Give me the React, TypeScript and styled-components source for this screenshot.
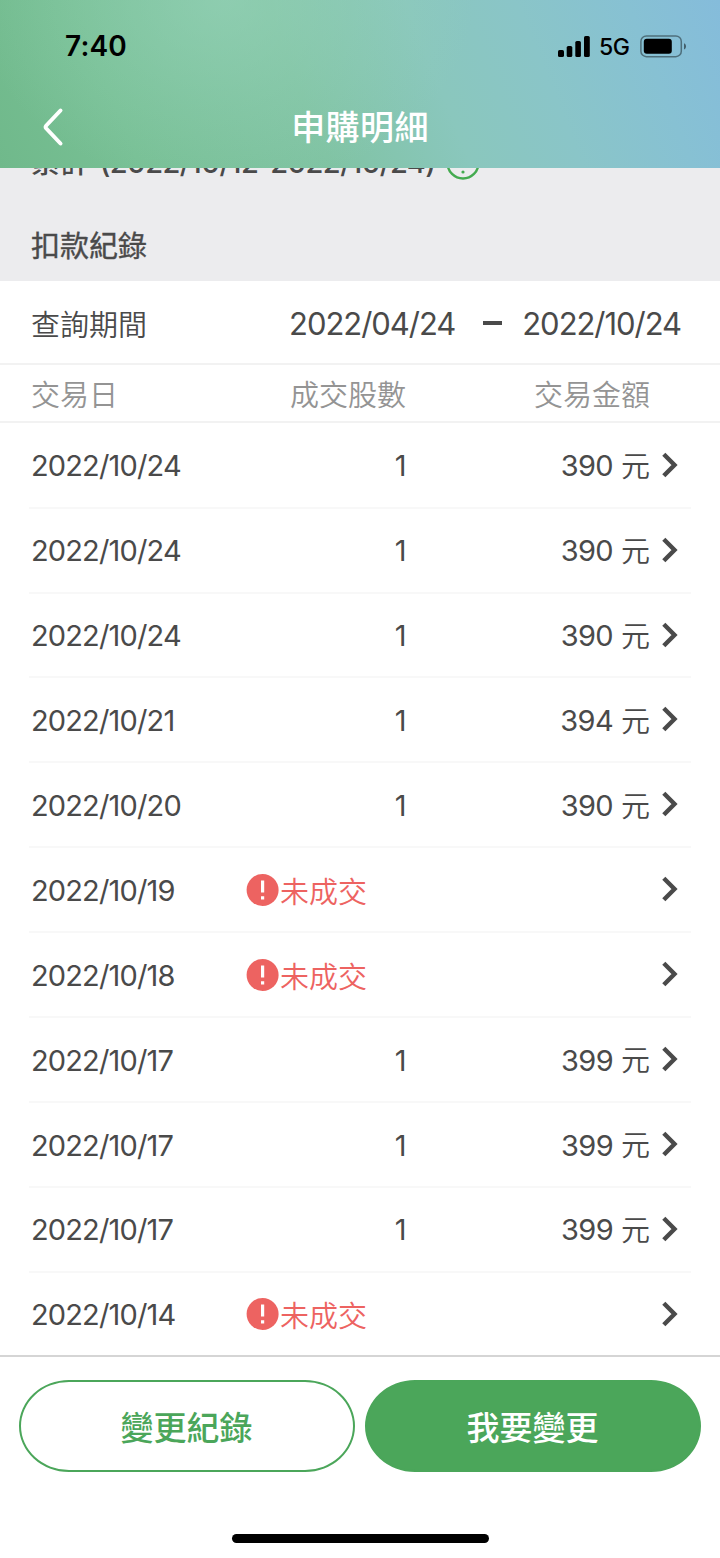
import React from "react";
import styled, { createGlobalStyle } from "styled-components";

const GlobalStyle = createGlobalStyle`
  *, *::before, *::after { box-sizing: border-box; }
  body {
    margin: 0;
    background: #fff;
    color: #4a4a4a;
    font-family: Inter, "Noto Sans CJK TC", sans-serif;
  }
`;

const Screen = styled.div`
  width: 720px;
  height: 1558px;
  display: flex;
  flex-direction: column;
  overflow: hidden;
  background: #fff;
`;

const Header = styled.header`
  flex: none;
  height: 168px;
  display: flex;
  flex-direction: column;
  background:
    radial-gradient(ellipse 250px 190px at 225px 0, rgba(152, 212, 186, 0.6), rgba(152, 212, 186, 0.25) 55%, rgba(152, 212, 186, 0)),
    linear-gradient(68deg, #70b98b 0%, #78c095 18%, #80c3a3 42%, #8ac7bd 60%, #8ac5c8 74%, #87c1d3 88%, #85bcdb 100%);
`;

const StatusBar = styled.div`
  height: 88px;
  padding: 4px 34px 0 65px;
  display: flex;
  align-items: center;
  justify-content: space-between;
  color: #000;
`;

const Clock = styled.span`
  font-size: 28px;
  font-weight: 600;
  letter-spacing: 0.2px;
`;

const StatusIcons = styled.div`
  display: flex;
  align-items: center;
`;

const Network = styled.span`
  width: 50px;
  padding: 2px 0 0 9px;
  font-size: 23px;
  font-weight: 500;
  letter-spacing: -0.5px;
  white-space: nowrap;
`;

const NavBar = styled.nav`
  height: 80px;
  display: grid;
  grid-template-columns: 120px 1fr 120px;
  align-items: center;
`;

const BackButton = styled.button`
  width: 30px;
  height: 44px;
  margin: 0 0 2px 38px;
  padding: 0;
  border: 0;
  background: none;
`;

const Title = styled.h1`
  margin: 0;
  text-align: center;
  color: #fff;
  font-size: 34px;
  font-weight: 500;
  line-height: 50px;
  letter-spacing: 0.4px;
`;

const Summary = styled.section`
  flex: none;
  height: 113px;
  padding: 0 31px;
  display: flex;
  flex-direction: column;
  justify-content: flex-end;
  overflow: hidden;
  background: #ececee;
`;

const Accumulated = styled.div`
  display: flex;
  align-items: center;
  gap: 11px;
  height: 40px;
  margin-bottom: 42px;
  font-size: 29px;
  font-weight: 500;
  white-space: nowrap;
`;

const AccumulatedText = styled.span`
  padding-bottom: 7px;
`;

const AccumulatedRange = styled.span`
  margin-left: 3px;
  letter-spacing: -0.6px;
`;

const SectionTitle = styled.h2`
  margin: 0 0 12px;
  font-size: 29px;
  font-weight: 400;
  line-height: 44px;
  -webkit-text-stroke: 0.35px #4a4a4a;
`;

const PeriodRow = styled.div`
  flex: none;
  height: 84px;
  padding: 2px 39px 0 31px;
  display: flex;
  align-items: center;
  border-bottom: 2px solid #f2f2f2;
`;

const PeriodLabel = styled.span`
  font-size: 29px;
  font-weight: 350;
`;

const PeriodDates = styled.div`
  margin-left: auto;
  display: flex;
  align-items: center;
  padding-top: 1px;
  font-size: 31px;
  letter-spacing: -1.05px;
`;

const Dash = styled.i`
  width: 19px;
  height: 4px;
  margin: 0 20px 2px 28px;
  background: #4a4a4a;
`;

const TableHead = styled.div`
  flex: none;
  height: 58px;
  display: grid;
  grid-template-columns: 31px 215px 160px 244px 70px;
  align-items: center;
  border-bottom: 2px solid #f2f2f2;
  color: #949494;
  font-size: 29px;
  font-weight: 350;
`;

const Cell = styled.div<{ $align?: "left" | "right" }>`
  display: flex;
  align-items: center;
  justify-content: ${(p) => (p.$align === "right" ? "flex-end" : "flex-start")};
  white-space: nowrap;
`;

const List = styled.div`
  flex: none;
  height: 932px;
  padding-top: 0.8px;
  overflow: hidden;
`;

const Row = styled.div`
  height: 84.9px;
  margin: 0 29px;
  display: grid;
  grid-template-columns: 2px 215px 160px 244px 41px;
  align-items: center;
  border-bottom: 2px solid #f8f8f8;
  font-size: 29px;
  letter-spacing: -0.65px;
`;

const NumberCell = styled(Cell)`
  padding-top: 1.4px;
`;

const DateCell = styled(NumberCell)`
  letter-spacing: -0.85px;
`;

const Unit = styled.span`
  margin-left: 8px;
  line-height: 40px;
  font-weight: 350;
  letter-spacing: 0;
  transform: translateY(0.6px);
`;

const Failed = styled.span`
  display: flex;
  align-items: center;
  gap: 1px;
  color: #ed6361;
  font-weight: 350;
  letter-spacing: 0;
`;

const Footer = styled.footer`
  flex: 1;
  display: flex;
  flex-direction: column;
  align-items: center;
  padding: 23px 19px 0;
  border-top: 2px solid #d5d5d5;
`;

const Actions = styled.div`
  width: 100%;
  display: grid;
  grid-template-columns: 1fr 1fr;
  gap: 10px;
`;

const ActionButton = styled.button<{ $primary?: boolean }>`
  height: 92px;
  padding: 0 1px 0 0;
  border: 2px solid #4ba65a;
  border-radius: 50px / 46px;
  background: ${(p) => (p.$primary ? "#4ba65a" : "#fff")};
  color: ${(p) => (p.$primary ? "#fff" : "#4ba65a")};
  font-family: inherit;
  font-size: 33px;
  font-weight: 500;
`;

const HomeIndicator = styled.div`
  width: 257px;
  height: 9px;
  margin-top: 62px;
  border-radius: 5px;
  background: #000;
`;

const Signal = () => (
  <svg width="32" height="21" viewBox="0 0 32 21">
    <rect x="0" y="14" width="6" height="7" rx="1.6" />
    <rect x="8.7" y="10" width="5.6" height="11" rx="1.6" />
    <rect x="17.3" y="5" width="5.6" height="16" rx="1.6" />
    <rect x="26" y="0" width="5.8" height="21" rx="1.6" />
  </svg>
);

const Battery = () => (
  <svg width="46" height="23" viewBox="0 0 46 23">
    <rect x="0.9" y="0.9" width="40.4" height="20.8" rx="5.5" fill="none" stroke="#000" strokeOpacity="0.42" strokeWidth="1.5" />
    <rect x="3.8" y="3.7" width="28" height="15" rx="3" />
    <path d="M44 8.2c2.7 1 2.7 5.400 0 6.400z" fillOpacity="0.5" />
  </svg>
);

const BackIcon = () => (
  <svg width="30" height="44" viewBox="0 0 30 44" fill="none" stroke="#fff" strokeWidth="4" strokeLinecap="round" strokeLinejoin="round">
    <path d="M22.500 5.500L8.300 20.500Q7 22 8.300 23.500L22.500 38.500" />
  </svg>
);

const InfoIcon = () => (
  <svg width="34" height="34" viewBox="0 0 34 34">
    <circle cx="17" cy="17" r="15.500" fill="none" stroke="#44ab50" strokeWidth="2.400" />
    <path d="M17 8v10" stroke="#44ab50" strokeWidth="2.400" />
    <circle cx="17" cy="26" r="1.600" fill="#44ab50" />
  </svg>
);

const AlertIcon = () => (
  <svg width="33" height="34" viewBox="0 0 33 34">
    <circle cx="16.600" cy="17" r="16" fill="#ed6361" />
    <path d="M16.600 7.500v12M16.600 23.200v3.300" stroke="#fff" strokeWidth="3.200" />
  </svg>
);

const Chevron = () => (
  <svg width="20" height="28" viewBox="0 0 20 28" fill="none" stroke="#4a4a4a" strokeWidth="4.400">
    <path d="M2.800 3.200L13.500 14L2.800 24.800" />
  </svg>
);

const ChevronCell = styled(Cell)`
  padding: 0 0 1px 11px;
`;

type Entry = { date: string; shares?: string; amount?: string };

const entries: Entry[] = [
  { date: "2022/10/24", shares: "1", amount: "390" },
  { date: "2022/10/24", shares: "1", amount: "390" },
  { date: "2022/10/24", shares: "1", amount: "390" },
  { date: "2022/10/21", shares: "1", amount: "394" },
  { date: "2022/10/20", shares: "1", amount: "390" },
  { date: "2022/10/19" },
  { date: "2022/10/18" },
  { date: "2022/10/17", shares: "1", amount: "399" },
  { date: "2022/10/17", shares: "1", amount: "399" },
  { date: "2022/10/17", shares: "1", amount: "399" },
  { date: "2022/10/14" },
];

export default function App() {
  return (
    <Screen>
      <GlobalStyle />
      <Header>
        <StatusBar>
          <Clock>7:40</Clock>
          <StatusIcons>
            <Signal />
            <Network>5G</Network>
            <Battery />
          </StatusIcons>
        </StatusBar>
        <NavBar>
          <BackButton aria-label="返回">
            <BackIcon />
          </BackButton>
          <Title>申購明細</Title>
        </NavBar>
      </Header>
      <Summary>
        <Accumulated>
          <AccumulatedText>
            累計 <AccumulatedRange>(2022/10/12-2022/10/24)</AccumulatedRange>
          </AccumulatedText>
          <InfoIcon />
        </Accumulated>
        <SectionTitle>扣款紀錄</SectionTitle>
      </Summary>
      <PeriodRow>
        <PeriodLabel>查詢期間</PeriodLabel>
        <PeriodDates>
          <span>2022/04/24</span>
          <Dash />
          <span>2022/10/24</span>
        </PeriodDates>
      </PeriodRow>
      <TableHead>
        <span />
        <Cell>交易日</Cell>
        <Cell $align="right">成交股數</Cell>
        <Cell $align="right">交易金額</Cell>
      </TableHead>
      <List>
        {entries.map((entry, i) => (
          <Row key={i}>
            <span />
            <DateCell>{entry.date}</DateCell>
            {entry.shares ? (
              <NumberCell $align="right">{entry.shares}</NumberCell>
            ) : (
              <Failed>
                <AlertIcon />
                未成交
              </Failed>
            )}
            <NumberCell $align="right">
              {entry.amount && (
                <>
                  {entry.amount}
                  <Unit>元</Unit>
                </>
              )}
            </NumberCell>
            <ChevronCell>
              <Chevron />
            </ChevronCell>
          </Row>
        ))}
      </List>
      <Footer>
        <Actions>
          <ActionButton>變更紀錄</ActionButton>
          <ActionButton $primary>我要變更</ActionButton>
        </Actions>
        <HomeIndicator />
      </Footer>
    </Screen>
  );
}
